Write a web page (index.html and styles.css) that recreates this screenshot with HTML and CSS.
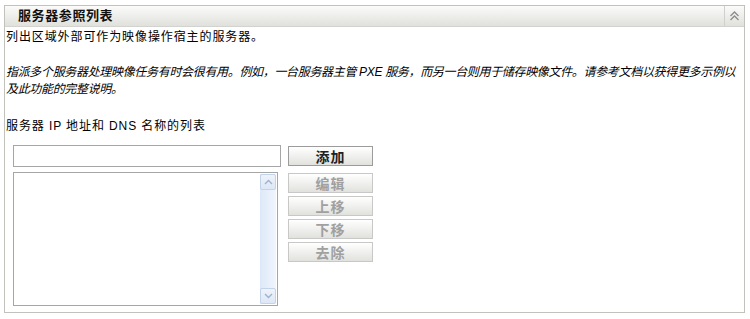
FILE: index.html
```html
<!DOCTYPE html>
<html lang="zh-CN">
<head>
<meta charset="utf-8">
<title>服务器参照列表</title>
<link rel="stylesheet" href="styles.css">
</head>
<body>
<section class="panel">
  <header class="panel-head">
    <h1 class="panel-title">服务器参照列表</h1>
    <button class="collapse" type="button" aria-label="折叠">
      <svg width="11" height="10" viewBox="0 0 11 10"><path d="M1.5 5 L5.5 1 L9.5 5 M1.5 9 L5.5 5 L9.5 9" fill="none" stroke="#8c8c8c" stroke-width="1.3"/></svg>
    </button>
  </header>
  <div class="panel-body">
    <p class="intro">列出区域外部可作为映像操作宿主的服务器。</p>
    <p class="note">指派多个服务器处理映像任务有时会很有用。例如，一台服务器主管 PXE 服务，而另一台则用于储存映像文件。请参考文档以获得更多示例以及此功能的完整说明。</p>
    <p class="label">服务器 IP 地址和 DNS 名称的列表</p>
    <div class="editor">
      <input class="entry" type="text">
      <button class="btn btn-add" type="button">添加</button>
      <div class="listbox">
        <div class="scrollbar">
          <span class="sb-btn"><svg width="9" height="6" viewBox="0 0 9 6"><path d="M1 5 L4.5 1.5 L8 5" fill="none" stroke="#9fb3cf" stroke-width="1.4"/></svg></span>
          <span class="sb-track"></span>
          <span class="sb-btn"><svg width="9" height="6" viewBox="0 0 9 6"><path d="M1 1 L4.5 4.5 L8 1" fill="none" stroke="#9fb3cf" stroke-width="1.4"/></svg></span>
        </div>
      </div>
      <div class="actions">
        <button class="btn" type="button" disabled>编辑</button>
        <button class="btn" type="button" disabled>上移</button>
        <button class="btn" type="button" disabled>下移</button>
        <button class="btn" type="button" disabled>去除</button>
      </div>
    </div>
  </div>
</section>
</body>
</html>
```
FILE: styles.css
```css
html, body {
  margin: 0;
  padding: 0;
  background: #ffffff;
}

body {
  font-family: "Liberation Sans", "Noto Sans CJK SC", sans-serif;
  font-size: 12px;
  color: #000;
}

.panel {
  margin: 5px 0 0 4px;
  width: 739px;
  height: 306px;
  border: 1px solid #c2c2bd;
  display: flex;
  flex-direction: column;
}

.panel-head {
  display: flex;
  align-items: stretch;
  height: 20px;
  border-bottom: 1px solid #d2d2ce;
  background: linear-gradient(#fbfbfa, #e0e0dc);
}

.panel-title {
  flex: 1;
  margin: 0;
  padding-left: 13px;
  font-size: 13px;
  font-weight: bold;
  line-height: 20px;
  letter-spacing: 0.6px;
  color: #111;
}

.collapse {
  width: 20px;
  padding: 0;
  margin: 0;
  border: none;
  border-left: 1px solid #cfcfcb;
  background: transparent;
  display: flex;
  align-items: center;
  justify-content: center;
}

.panel-body {
  padding-left: 1px;
}

.panel-body p {
  margin: 0;
  line-height: 17px;
}

.intro {
  padding-top: 2px;
  font-size: 12px;
  letter-spacing: 0.9px;
}

.note {
  margin-top: 18px !important;
  font-style: italic;
  font-size: 12px;
  letter-spacing: -0.33px;
}

.label {
  margin-top: 20px !important;
  letter-spacing: 0.9px;
}

.editor {
  margin-top: 10px;
  padding-left: 7px;
  display: grid;
  grid-template-columns: 268px 85px;
  column-gap: 7px;
  row-gap: 5px;
  align-items: start;
}

.entry {
  box-sizing: border-box;
  width: 268px;
  height: 22px;
  margin: 0;
  border: 1px solid #a6a6a6;
  padding: 0 3px;
  font: inherit;
}

.btn {
  box-sizing: border-box;
  width: 85px;
  height: 20px;
  margin: 0;
  padding: 0;
  border: 1px solid #c8c8c6;
  background: linear-gradient(#ffffff, #e1e1dd);
  font-family: "Noto Sans CJK SC", sans-serif;
  font-size: 14px;
  font-weight: bold;
  line-height: 18px;
  letter-spacing: 1px;
  color: #a0a0a0;
}

.btn-add {
  align-self: center;
  border-color: #9c9c9c;
  color: #222;
}

.listbox {
  box-sizing: border-box;
  width: 265px;
  height: 134px;
  border: 1px solid #a6a6a6;
  display: flex;
  justify-content: flex-end;
  padding: 1px 1px 1px 0;
}

.scrollbar {
  width: 16px;
  display: flex;
  flex-direction: column;
  background: linear-gradient(90deg, #dde8f8, #f0f5fd);
}

.sb-btn {
  box-sizing: border-box;
  height: 16px;
  border: 1px solid #c3d3ea;
  border-radius: 2px;
  background: linear-gradient(#eef3fb, #dde7f6);
  display: flex;
  align-items: center;
  justify-content: center;
}

.sb-track {
  flex: 1;
}

.actions {
  margin-top: 1px;
  display: flex;
  flex-direction: column;
  gap: 3px;
}
```
